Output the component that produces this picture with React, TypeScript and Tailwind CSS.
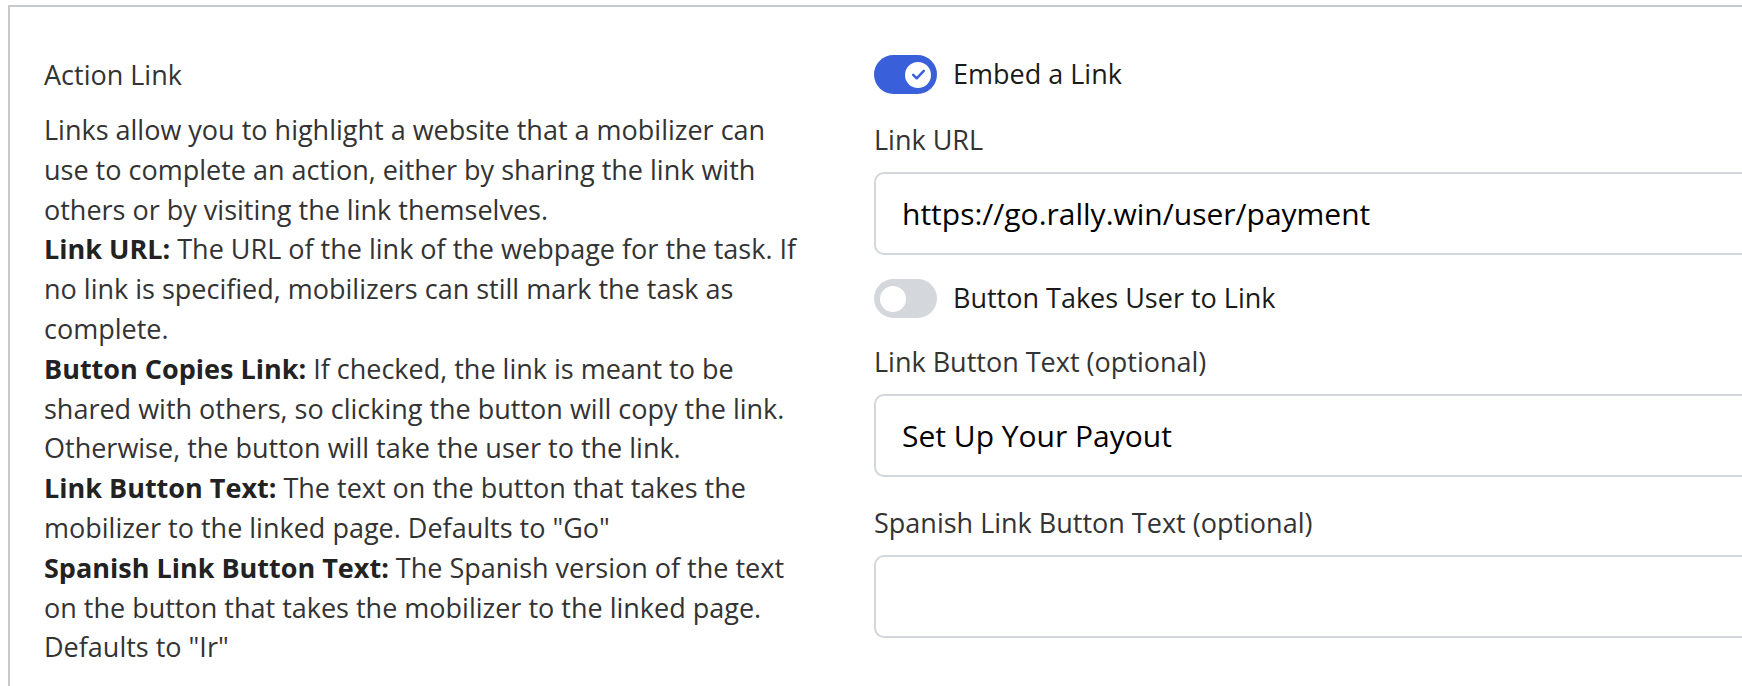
import React, { useState } from 'react';

const font = { fontFamily: '"Open Sans", Lato, sans-serif' };

interface ToggleProps {
  on: boolean;
  onChange: () => void;
  label: string;
}

const Toggle = ({ on, onChange, label }: ToggleProps) => (
  <button type="button" onClick={onChange} className="flex h-[39px] items-center gap-[16px]">
    <span
      className={`flex h-[39px] w-[63px] items-center rounded-full px-[6px] ${
        on ? 'justify-end bg-[#3a5fdb]' : 'justify-start bg-[#d4d7dc]'
      }`}
    >
      <span className="flex h-[26px] w-[26px] items-center justify-center rounded-full bg-white">
        {on && (
          <svg width="17" height="17" viewBox="0 0 16 16" fill="none">
            <path d="M3 8.3l3.3 3.3L13 4.6" stroke="#3a5fdb" strokeWidth="2.3" strokeLinecap="round" strokeLinejoin="round" />
          </svg>
        )}
      </span>
    </span>
    <span className="text-[27px] text-[#1a1a1a]">{label}</span>
  </button>
);

const Field = ({ label, value }: { label: string; value: string }) => {
  const [v, setV] = useState(value);
  return (
    <div>
      <label className="block text-[27px] leading-[40px] text-[#333]">{label}</label>
      <input
        value={v}
        onChange={(e) => setV(e.target.value)}
        className="mt-[12px] h-[83px] w-full rounded-[10px] border-2 border-[#d3d6da] bg-white px-[26px] text-[30px] text-black outline-none"
        style={font}
      />
    </div>
  );
};

export default function App() {
  const [embed, setEmbed] = useState(true);
  const [takesUser, setTakesUser] = useState(false);

  return (
    <div className="h-[686px] w-[1742px] overflow-hidden bg-white pl-[8px] pt-[5px]" style={font}>
      <div className="flex h-[700px] w-[1900px] border-l-2 border-t-2 border-[#c6cace]">
        {/* Help text */}
        <div className="w-[864px] shrink-0 pl-[34px] pt-[48px] text-[27px] text-[#333]">
          <h3 className="mb-[15px] leading-[40px]">Action Link</h3>
          <p className="leading-[39.8px]">
            Links allow you to highlight a website that a mobilizer can<br />
            use to complete an action, either by sharing the link with<br />
            others or by visiting the link themselves.<br />
            <b className="font-bold text-[#222]">Link URL:</b> The URL of the link of the webpage for the task. If<br />
            no link is specified, mobilizers can still mark the task as<br />
            complete.<br />
            <b className="font-bold text-[#222]">Button Copies Link:</b> If checked, the link is meant to be<br />
            shared with others, so clicking the button will copy the link.<br />
            Otherwise, the button will take the user to the link.<br />
            <b className="font-bold text-[#222]">Link Button Text:</b> The text on the button that takes the<br />
            mobilizer to the linked page. Defaults to "Go"<br />
            <b className="font-bold text-[#222]">Spanish Link Button Text:</b> The Spanish version of the text<br />
            on the button that takes the mobilizer to the linked page.<br />
            Defaults to "Ir"
          </p>
        </div>

        {/* Form */}
        <div className="flex w-[1000px] flex-col pt-[48px]">
          <Toggle on={embed} onChange={() => setEmbed(!embed)} label="Embed a Link" />
          <div className="mt-[26px]">
            <Field label="Link URL" value="https://go.rally.win/user/payment" />
          </div>
          <div className="mt-[24px]">
            <Toggle on={takesUser} onChange={() => setTakesUser(!takesUser)} label="Button Takes User to Link" />
          </div>
          <div className="mt-[24px]">
            <Field label="Link Button Text (optional)" value="Set Up Your Payout" />
          </div>
          <div className="mt-[26px]">
            <Field label="Spanish Link Button Text (optional)" value="" />
          </div>
        </div>
      </div>
    </div>
  );
}
